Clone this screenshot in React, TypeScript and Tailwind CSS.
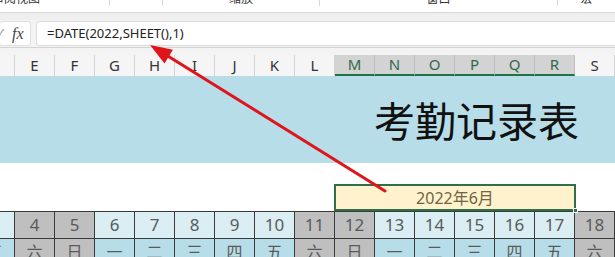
import React from "react";

const cols = ["D","E","F","G","H","I","J","K","L","M","N","O","P","Q","R","S"];
const dates = [3,4,5,6,7,8,9,10,11,12,13,14,15,16,17,18];
const wd = ["五","六","日","一","二","三","四","五","六","日","一","二","三","四","五","六"];
const sel = new Set(["M","N","O","P","Q","R"]);
const font = { fontFamily: '"Noto Sans","Noto Sans CJK SC",sans-serif' };

export default function App() {
  return (
    <div className="relative w-[615px] h-[257px] overflow-hidden bg-white" style={font}>
      {/* ribbon remnant */}
      <div className="flex h-[12px] overflow-hidden bg-white text-[12px] leading-[12px] text-[#333]">
        <div className="w-[110px] h-[6px] border-r border-[#d6d6d6] relative">
          <span className="absolute left-[-8px] top-[-7px] whitespace-nowrap">审阅视图</span>
        </div>
        <div className="w-[53px] h-[6px] border-r border-[#d6d6d6]" />
        <div className="w-[157px] h-[6px] border-r border-[#d6d6d6] relative flex justify-center">
          <span className="relative top-[-7px] whitespace-nowrap">缩放</span>
        </div>
        <div className="w-[238px] h-[6px] border-r border-[#d6d6d6] relative flex justify-center">
          <span className="relative top-[-7px] whitespace-nowrap">窗口</span>
        </div>
        <div className="flex-1 h-[6px] flex justify-center">
          <span className="relative top-[-7px] whitespace-nowrap">宏</span>
        </div>
      </div>
      <div className="h-[8px] bg-[#efefef] border-t border-[#d9d9d9]" />
      {/* formula bar */}
      <div className="h-[27px] bg-[#f3f3f3] flex items-center">
        <div className="w-[32px] h-[25px] bg-white rounded-[3px] border border-[#e0e0e0] ml-[-1px] flex items-center relative">
          <span className="absolute left-[-4px] text-[12px] text-[#9a9a9a]">✓</span>
          <span className="ml-[12px] text-[16px] italic text-[#444]" style={{ fontFamily: '"Liberation Serif",serif' }}>fx</span>
        </div>
        <div className="ml-[5px] flex-1 h-[25px] bg-white rounded-l-[3px] border border-r-0 border-[#dcdcdc] flex items-center pl-[10px] text-[13px] text-[#222]">
          =DATE(2022,SHEET(),1)
        </div>
      </div>
      <div className="h-[8px] bg-[#f3f3f3] border-t border-[#d4d4d4]" />
      {/* column headers */}
      <div className="h-[21px] flex ml-[-25px] bg-[#f5f5f5]">
        {cols.map((c) => (
          <div
            key={c}
            className={
              sel.has(c)
                ? "w-[40px] shrink-0 flex items-center justify-center border-r border-[#bdbdbd] bg-[#d3d3d3] border-b-2 border-b-[#217346] text-[15px] text-[#2e6b4c]"
                : "w-[40px] shrink-0 flex items-center justify-center border-r border-[#d4d4d4] text-[15px] text-[#333]"
            }
          >
            {c}
          </div>
        ))}
      </div>
      {/* title band */}
      <div className="h-[87px] bg-[#b7dde8] flex items-center justify-end pr-[36px]">
        <span className="text-[41px] leading-none text-[#111]" style={{ fontFamily: '"Noto Sans CJK SC",sans-serif' }}>考勤记录表</span>
      </div>
      <div className="h-[21px] bg-white" />
      {/* month row */}
      <div className="h-[27px] flex">
        <div className="w-[334px] shrink-0" />
        <div className="relative w-[242px] h-[27px] border-2 border-[#2f6f4a] bg-[#fff2cc] flex items-center justify-center text-[16px] text-[#6e6446]">
          2022年6月
          <div className="absolute right-[-4px] bottom-[-4px] w-[5px] h-[5px] bg-[#2f6f4a] border border-white" />
        </div>
      </div>
      {/* dates */}
      <div className="flex ml-[-25px] border-t border-[#3a3a3a]">
        {dates.map((d, i) => {
          const we = wd[i] === "六" || wd[i] === "日";
          return (
            <div
              key={d}
              className={
                we
                  ? "w-[40px] h-[27px] shrink-0 flex items-center justify-center border-r border-b border-[#3a3a3a] bg-[#bfbfbf] text-[17px] text-[#5a5a5a]"
                  : "w-[40px] h-[27px] shrink-0 flex items-center justify-center border-r border-b border-[#3a3a3a] bg-[#daeef3] text-[17px] text-[#5a5a5a]"
              }
            >
              {d}
            </div>
          );
        })}
      </div>
      <div className="flex ml-[-25px]">
        {wd.map((w, i) => {
          const we = w === "六" || w === "日";
          return (
            <div
              key={i}
              className={
                we
                  ? "w-[40px] h-[27px] shrink-0 flex items-center justify-center border-r border-b border-[#3a3a3a] bg-[#bfbfbf] text-[16px] text-[#5a5a5a]"
                  : "w-[40px] h-[27px] shrink-0 flex items-center justify-center border-r border-b border-[#3a3a3a] bg-[#b7dde8] text-[16px] text-[#5a5a5a]"
              }
            >
              {w}
            </div>
          );
        })}
      </div>
      {/* red arrow overlay */}
      <svg className="absolute left-0 top-0 pointer-events-none" width="615" height="257" viewBox="0 0 615 257">
        <line x1="385" y1="191" x2="165" y2="54.3" stroke="#e0141b" strokeWidth="3" strokeLinecap="round" />
        <polygon points="150,45 164.5,63.4 172.9,49.8" fill="#e0141b" />
      </svg>
    </div>
  );
}
